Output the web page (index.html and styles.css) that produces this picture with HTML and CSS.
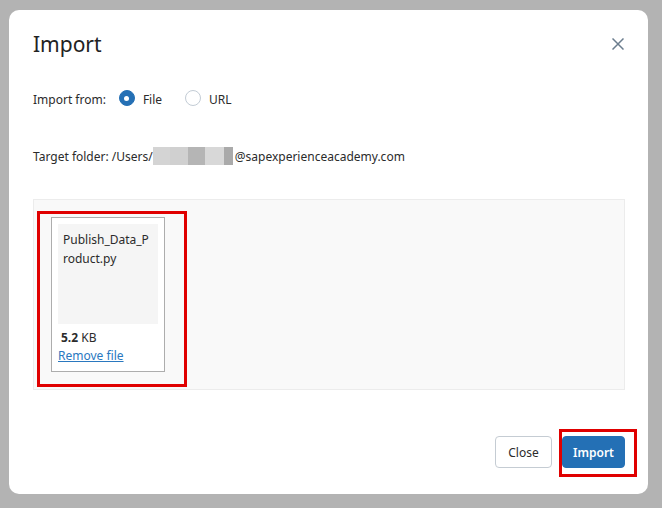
FILE: index.html
```html
<!DOCTYPE html>
<html>
<head>
<meta charset="utf-8">
<link rel="stylesheet" href="styles.css">
</head>
<body>
<div class="modal">
  <div class="header">
    <h1 class="title">Import</h1>
    <button class="close-x" aria-label="Close">
      <svg width="12" height="12" viewBox="0 0 12 12"><path d="M0.5 0.5 L11.5 11.5 M11.5 0.5 L0.5 11.5" stroke="#6b7d8e" stroke-width="1.5" fill="none"/></svg>
    </button>
  </div>
  <div class="source-row">
    <span class="label">Import from:</span>
    <label class="radio"><span class="dot checked"></span>File</label>
    <label class="radio"><span class="dot"></span>URL</label>
  </div>
  <div class="target">Target folder: /Users/<span class="blur"><i class="b1"></i><i class="b2"></i><i class="b3"></i><i class="b4"></i><i class="b5"></i></span>@sapexperienceacademy.com</div>
  <div class="dropzone">
    <div class="card">
      <div class="preview">Publish_Data_P<br>roduct.py</div>
      <div class="size"><b>5.2</b> KB</div>
      <a class="remove" href="#">Remove file</a>
    </div>
    <div class="mark mark-card"></div>
  </div>
  <div class="footer">
    <button class="btn btn-secondary">Close</button>
    <button class="btn btn-primary">Import<span class="mark mark-btn"></span></button>
  </div>
</div>
</body>
</html>
```
FILE: styles.css
```css
* { box-sizing: border-box; }
html, body { margin: 0; height: 100%; }
body {
  background: #b3b3b3;
  padding: 10px 0 0 9px;
  font-family: "Segoe UI", "Noto Sans", "Open Sans", sans-serif;
  font-size: 12px;
  color: #2b2b2b;
}
.modal {
  width: 639px;
  height: 484px;
  background: #fff;
  border-radius: 10px;
  padding: 0 23px 0 24px;
  display: flex;
  flex-direction: column;
}
.header {
  display: flex;
  align-items: center;
  justify-content: space-between;
  height: 66px;
  padding-top: 2px;
}
.title {
  margin: 0;
  font-size: 21px;
  font-weight: 400;
  color: #222;
}
.close-x {
  border: 0;
  background: none;
  padding: 0;
  margin-right: 1px;
  width: 12px;
  height: 12px;
  display: flex;
}
.source-row {
  display: flex;
  align-items: center;
  margin-top: 14px;
  height: 18px;
}
.label { margin-right: 13px; }
.radio {
  display: flex;
  align-items: center;
  margin-right: 23px;
}
.dot {
  width: 16px;
  height: 16px;
  border-radius: 50%;
  border: 1px solid #c3ccd5;
  background: #fff;
  margin-right: 8px;
  position: relative;
  top: -1px;
}
.dot.checked {
  background: #2570b5;
  border-color: #2570b5;
}
.dot.checked::after {
  content: "";
  position: absolute;
  width: 5px;
  height: 5px;
  border-radius: 50%;
  background: #fff;
  left: 4.5px;
  top: 4.5px;
}
.target {
  margin-top: 39px;
  height: 18px;
  display: flex;
  align-items: center;
  white-space: nowrap;
}
.blur {
  display: inline-flex;
  height: 18px;
  margin-right: 2px;
}
.blur i { display: block; height: 18px; }
.b1 { width: 17px; background: #d4d4d4; }
.b2 { width: 18px; background: #d0d0d0; }
.b3 { width: 17px; background: #b5b5b5; }
.b4 { width: 19px; background: #d8d8d8; }
.b5 { width: 9px; background: #aaaaaa; }
.dropzone {
  position: relative;
  margin-top: 34px;
  height: 191px;
  background: #f9f9f9;
  border: 1px solid #ececec;
  padding: 17px 0 0 17px;
}
.card {
  width: 114px;
  height: 155px;
  border: 1px solid #adadad;
  background: #fff;
  padding: 6px;
  display: flex;
  flex-direction: column;
}
.preview {
  height: 100px;
  background: #f5f5f5;
  padding: 6px 0 0 5px;
  line-height: 19px;
  color: #2b2b2b;
}
.size {
  margin-top: 5px;
  padding-left: 3px;
  line-height: 18px;
}
.size b { font-weight: 700; }
.remove {
  color: #2a78bf;
  text-decoration: underline;
  line-height: 18px;
  padding-left: 0;
}
.mark {
  position: absolute;
  border: 3px solid #e00000;
  pointer-events: none;
}
.mark-card {
  left: 3px;
  top: 11px;
  width: 150px;
  height: 176px;
}
.footer {
  display: flex;
  justify-content: flex-end;
  gap: 10px;
  margin-top: 46px;
}
.btn {
  height: 32px;
  border-radius: 4px;
  font-family: inherit;
  font-size: 12px;
  padding: 0;
  position: relative;
}
.btn-secondary {
  width: 57px;
  background: #fff;
  border: 1px solid #c5ccd3;
  color: #2b2b2b;
}
.btn-primary {
  width: 63px;
  background: #2470b5;
  border: 1px solid #2470b5;
  color: #fff;
  font-weight: 600;
}
.mark-btn {
  left: -4px;
  top: -8px;
  width: 78px;
  height: 48px;
}
```
